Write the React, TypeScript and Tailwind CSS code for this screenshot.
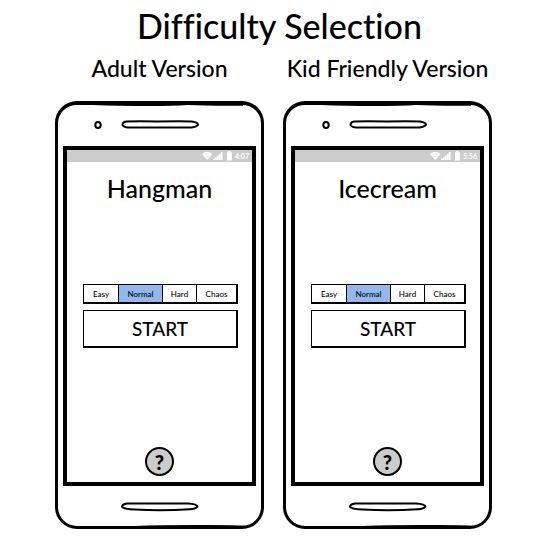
import { useState } from "react";

const LEVELS = [
  { name: "Easy", width: "w-[35px]" },
  { name: "Normal", width: "w-[44px]" },
  { name: "Hard", width: "w-[34px]" },
  { name: "Chaos", width: "flex-1" },
];

function StatusIcons() {
  return (
    <svg width="31" height="10" viewBox="0 0 31 10" fill="#fff" aria-hidden="true">
      <path d="M0 3.2Q5.200 -1.600 10.400 3.200L5.200 9Z" />
      <path d="M1.600 4.200Q5.200 1.300 8.800 4.200M3 5.900Q5.200 4.200 7.400 5.900" fill="none" stroke="#ccc" strokeWidth="0.500" />
      <path d="M11 9V7.600h1.800V6.400h2V4.800h2V3h2V1H20.500V9Z" />
      <path d="M14.500 6.400V9M16.500 4.800V9M18.500 3V9" stroke="#ddd" strokeWidth="0.300" />
      <path d="M25 1.200h1.300V0h2.200v1.200h1.300V9.600H25Z" />
    </svg>
  );
}

function TopHardware() {
  return (
    <svg className="mx-auto block" width="203" height="41" viewBox="0 0 203 41" fill="none" stroke="#000" strokeWidth="2" aria-hidden="true">
      <path d="M35 0Q60 1 90 1Q115 1 130 0Z" fill="#000" stroke="none" />
      <path d="M130 0H185V0.700Q150 1 130 0Z" fill="#000" stroke="none" />
      <ellipse cx="40" cy="20" rx="2.700" ry="2.900" />
      <path d="M68 16.400Q85 15.800 100 16.600Q123 15.800 134 16.600Q140 17.500 140 19.700Q138 22.800 129 22.600H70Q64.500 21.800 64.500 19.500Q64.800 16.900 68 16.400Z" />
    </svg>
  );
}

function BottomHardware() {
  return (
    <svg className="mx-auto block" width="203" height="40" viewBox="0 0 203 40" fill="none" stroke="#000" strokeWidth="2" aria-hidden="true">
      <path d="M69 17.400H130Q139 18 139.500 20.500Q138 22.800 132 23.200Q104 25 77 23.500Q65 23.200 64 20.700Q64 18.200 69 17.400Z" />
      <path d="M77 40Q105 38.800 150 39Q175 39 190 40Z" fill="#000" stroke="none" />
    </svg>
  );
}

function Phone({ title, time }: { title: string; time: string }) {
  const [level, setLevel] = useState("Normal");
  return (
    <section className="rounded-[22px] border-[3px] border-t-4 border-black" aria-label={title}>
      <TopHardware />
      <div className="mx-[5px] flex min-h-[340px] flex-col border-4 border-black pb-[6px]">
        <div className="flex h-3 items-center justify-end bg-[#ccc] pr-px text-white">
          <StatusIcons />
          <time className="w-[18px] text-center text-[7px] leading-3 font-bold">{time}</time>
        </div>
        <h3 className="mt-[10px] text-center text-[25px] leading-8">{title}</h3>
        <div className="mt-20 pr-[14px] pl-4">
          <div role="group" aria-label="Difficulty" className="flex h-5 border border-r-2 border-b-2 border-black">
            {LEVELS.map(({ name, width }) => (
              <button
                key={name}
                type="button"
                aria-pressed={level === name}
                onClick={() => setLevel(name)}
                className={`${width} border-r border-black text-center text-[8px] leading-4 last:border-r-0 ${level === name ? "bg-[#92b8ee]" : "bg-white"}`}
              >
                {name}
              </button>
            ))}
          </div>
          <button type="button" className="mt-[6px] block h-[38px] w-full border border-r-2 border-b-2 border-black text-center text-[19px] leading-8">
            START
          </button>
        </div>
        <button type="button" aria-label="Help" className="mx-auto mt-auto size-[29px] rounded-full border-2 border-black bg-[#ccc] text-center text-xl leading-6 font-black">
          ?
        </button>
      </div>
      <BottomHardware />
    </section>
  );
}

export default function App() {
  return (
    <main className="min-h-screen bg-white pt-1 pr-[43px] pb-4 pl-[55px] font-['Lato','Open_Sans',sans-serif] font-medium text-black [font-variant-ligatures:none]">
      <h1 className="pl-3 text-center text-[34px] leading-[44px]">Difficulty Selection</h1>
      <div className="mx-auto mt-1 grid max-w-[437px] grid-cols-2 gap-x-[19px]">
        <h2 className="text-center text-[23px] leading-8 whitespace-nowrap">Adult Version</h2>
        <h2 className="text-center text-[23px] leading-8 whitespace-nowrap">Kid Friendly Version</h2>
      </div>
      <div className="mx-auto mt-[17px] grid max-w-[437px] grid-cols-2 gap-x-[19px]">
        <Phone title="Hangman" time="4:07" />
        <Phone title="Icecream" time="5:56" />
      </div>
    </main>
  );
}
